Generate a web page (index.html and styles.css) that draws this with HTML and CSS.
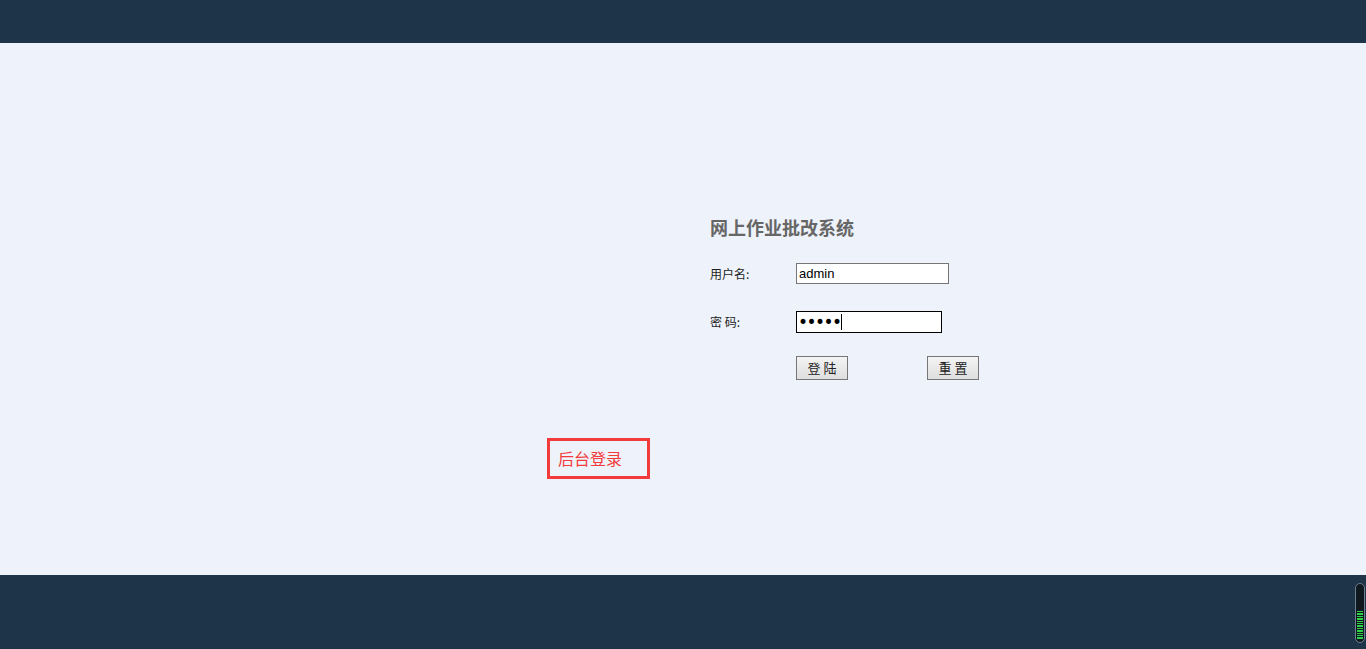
FILE: index.html
```html
<!DOCTYPE html>
<html lang="zh-CN">
<head>
<meta charset="utf-8">
<title>网上作业批改系统</title>
<link rel="stylesheet" href="styles.css">
</head>
<body>
<div class="header"></div>
<div class="main">
  <form class="login">
    <h1 class="title">网上作业批改系统</h1>
    <div class="row row-user">
      <label class="label">用户名:</label>
      <input class="field field-user" type="text" value="admin">
    </div>
    <div class="row row-pass">
      <label class="label">密 码:</label>
      <span class="pass-wrap"><input class="field field-pass" type="password" value="admin"></span>
    </div>
    <div class="row row-btn">
      <button class="btn" type="button">登 陆</button>
      <button class="btn btn-reset" type="button">重 置</button>
    </div>
  </form>
  <a class="admin-link" href="#">后台登录</a>
</div>
<div class="footer">
  <div class="gauge"><div class="gauge-fill"></div></div>
</div>
</body>
</html>
```
FILE: styles.css
```css
html, body {
  margin: 0;
  padding: 0;
}
body {
  background: #eef2fa;
  font-family: "Noto Sans CJK SC", "Liberation Sans", sans-serif;
  overflow: hidden;
}
.header {
  height: 43px;
  background: #1e3449;
}
.main {
  height: 532px;
  box-sizing: border-box;
  padding-top: 172px;
}
.login {
  margin: 0 0 0 710px;
  width: 300px;
}
.title {
  margin: 0;
  font-size: 18px;
  line-height: 24px;
  font-weight: bold;
  color: #666;
}
.row {
  display: flex;
  align-items: center;
}
.row-user { margin-top: 24px; height: 21px; }
.row-pass { margin-top: 27px; height: 22px; }
.row-btn { margin-top: 23px; height: 24px; padding-left: 86px; }
.label {
  width: 86px;
  font-size: 12px;
  color: #222;
  line-height: 14px;
}
.field {
  box-sizing: border-box;
  margin: 0;
  padding: 0 2px;
  font-family: "Liberation Sans", "Noto Sans CJK SC", sans-serif;
  font-size: 13px;
  color: #000;
  background: #fff;
  outline: none;
}
.field-user {
  width: 153px;
  height: 21px;
  border: 1px solid #767676;
}
.pass-wrap {
  position: relative;
  display: block;
  height: 22px;
}
.pass-wrap::after {
  content: "";
  position: absolute;
  left: 45px;
  top: 3px;
  width: 1px;
  height: 16px;
  background: #000;
}
.field-pass {
  display: block;
  width: 146px;
  height: 22px;
  padding: 0 1px;
  border: 1px solid #000;
  font-family: "DejaVu Sans", sans-serif;
  font-size: 17px;
  letter-spacing: -1.5px;
}
.btn {
  box-sizing: border-box;
  width: 52px;
  height: 24px;
  margin: 0;
  padding: 0;
  border: 1px solid #767676;
  background: linear-gradient(#f4f4f4, #dedede);
  font-family: "Noto Sans CJK SC", sans-serif;
  font-size: 13px;
  color: #222;
  line-height: 20px;
}
.btn-reset {
  margin-left: 79px;
}
.admin-link {
  display: block;
  box-sizing: border-box;
  width: 103px;
  height: 41px;
  margin: 58px 0 0 547px;
  padding: 7px 0 0 8px;
  border: 3px solid #f33b3b;
  color: #f33b3b;
  font-size: 16px;
  line-height: 20px;
  text-decoration: none;
}
.footer {
  position: relative;
  height: 74px;
  background: #1e3449;
}
.gauge {
  position: absolute;
  left: 1355px;
  top: 8px;
  width: 10px;
  height: 60px;
  box-sizing: border-box;
  border: 1px solid #6e7f90;
  border-radius: 5px;
  background: #0f171f;
}
.gauge-fill {
  position: absolute;
  left: 1px;
  right: 1px;
  bottom: 3px;
  height: 28px;
  background: repeating-linear-gradient(#2fd04a 0, #2fd04a 1.4px, #0f171f 1.4px, #0f171f 2.4px);
}
```
